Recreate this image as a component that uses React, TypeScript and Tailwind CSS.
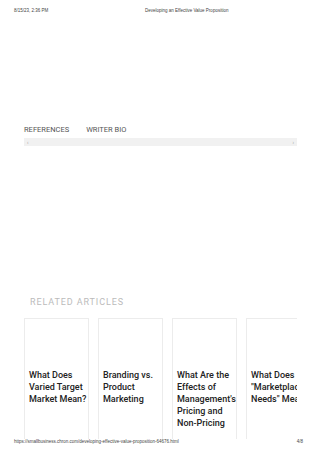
const articles = [
  ["What Does", "Varied Target", "Market Mean?"],
  ["Branding vs.", "Product", "Marketing"],
  ["What Are the", "Effects of", "Management's", "Pricing and", "Non-Pricing"],
  ["What Does", "\"Marketplace", "Needs\" Mean?"],
];

export default function App() {
  return (
    <div className="relative w-[320px] h-[453px] overflow-hidden bg-white font-['Roboto',sans-serif]">
      {/* Print header */}
      <div className="flex pt-[8px] px-[14px] text-[4.5px] leading-[6px] text-[#444] font-['Liberation_Sans',sans-serif]">
        <span className="w-[131px] shrink-0">8/15/23, 2:36 PM</span>
        <span>Developing an Effective Value Proposition</span>
      </div>

      {/* Tabs */}
      <div className="mt-[111px] px-[24px]">
        <div className="flex gap-[17px] text-[7.5px] leading-[10px] text-[#555]">
          <span>REFERENCES</span>
          <span>WRITER BIO</span>
        </div>
        <div className="mt-[3px] h-[8px] w-[273px] bg-[#f1f1f1] flex items-center justify-between px-[3px] text-[5px] leading-none text-[#999]">
          <span>‹</span>
          <span>›</span>
        </div>
      </div>

      {/* Related articles */}
      <div className="mt-[150px] pl-[30px] text-[9px] leading-[12px] tracking-[0.9px] text-[#bbb]">
        RELATED ARTICLES
      </div>

      <div className="mt-[10px] ml-[24px] w-[273px] h-[123px] overflow-hidden flex gap-[9px]">
        {articles.map((lines, i) => (
          <div
            key={i}
            className="w-[65px] shrink-0 h-[140px] border border-[#ececec] pt-[50px] pl-[4px] overflow-hidden"
          >
            <p className="text-[9px] leading-[12px] font-medium text-[#222] whitespace-nowrap">
              {lines.map((l, j) => (
                <span key={j} className="block">
                  {l}
                </span>
              ))}
            </p>
          </div>
        ))}
      </div>

      {/* Print footer */}
      <div className="absolute left-0 right-0 top-[439px] flex justify-between px-[14px] text-[4.5px] leading-[6px] text-[#444] font-['Liberation_Sans',sans-serif] bg-white">
        <span>https://smallbusiness.chron.com/developing-effective-value-proposition-64676.html</span>
        <span className="pr-[3px]">4/8</span>
      </div>
    </div>
  );
}
